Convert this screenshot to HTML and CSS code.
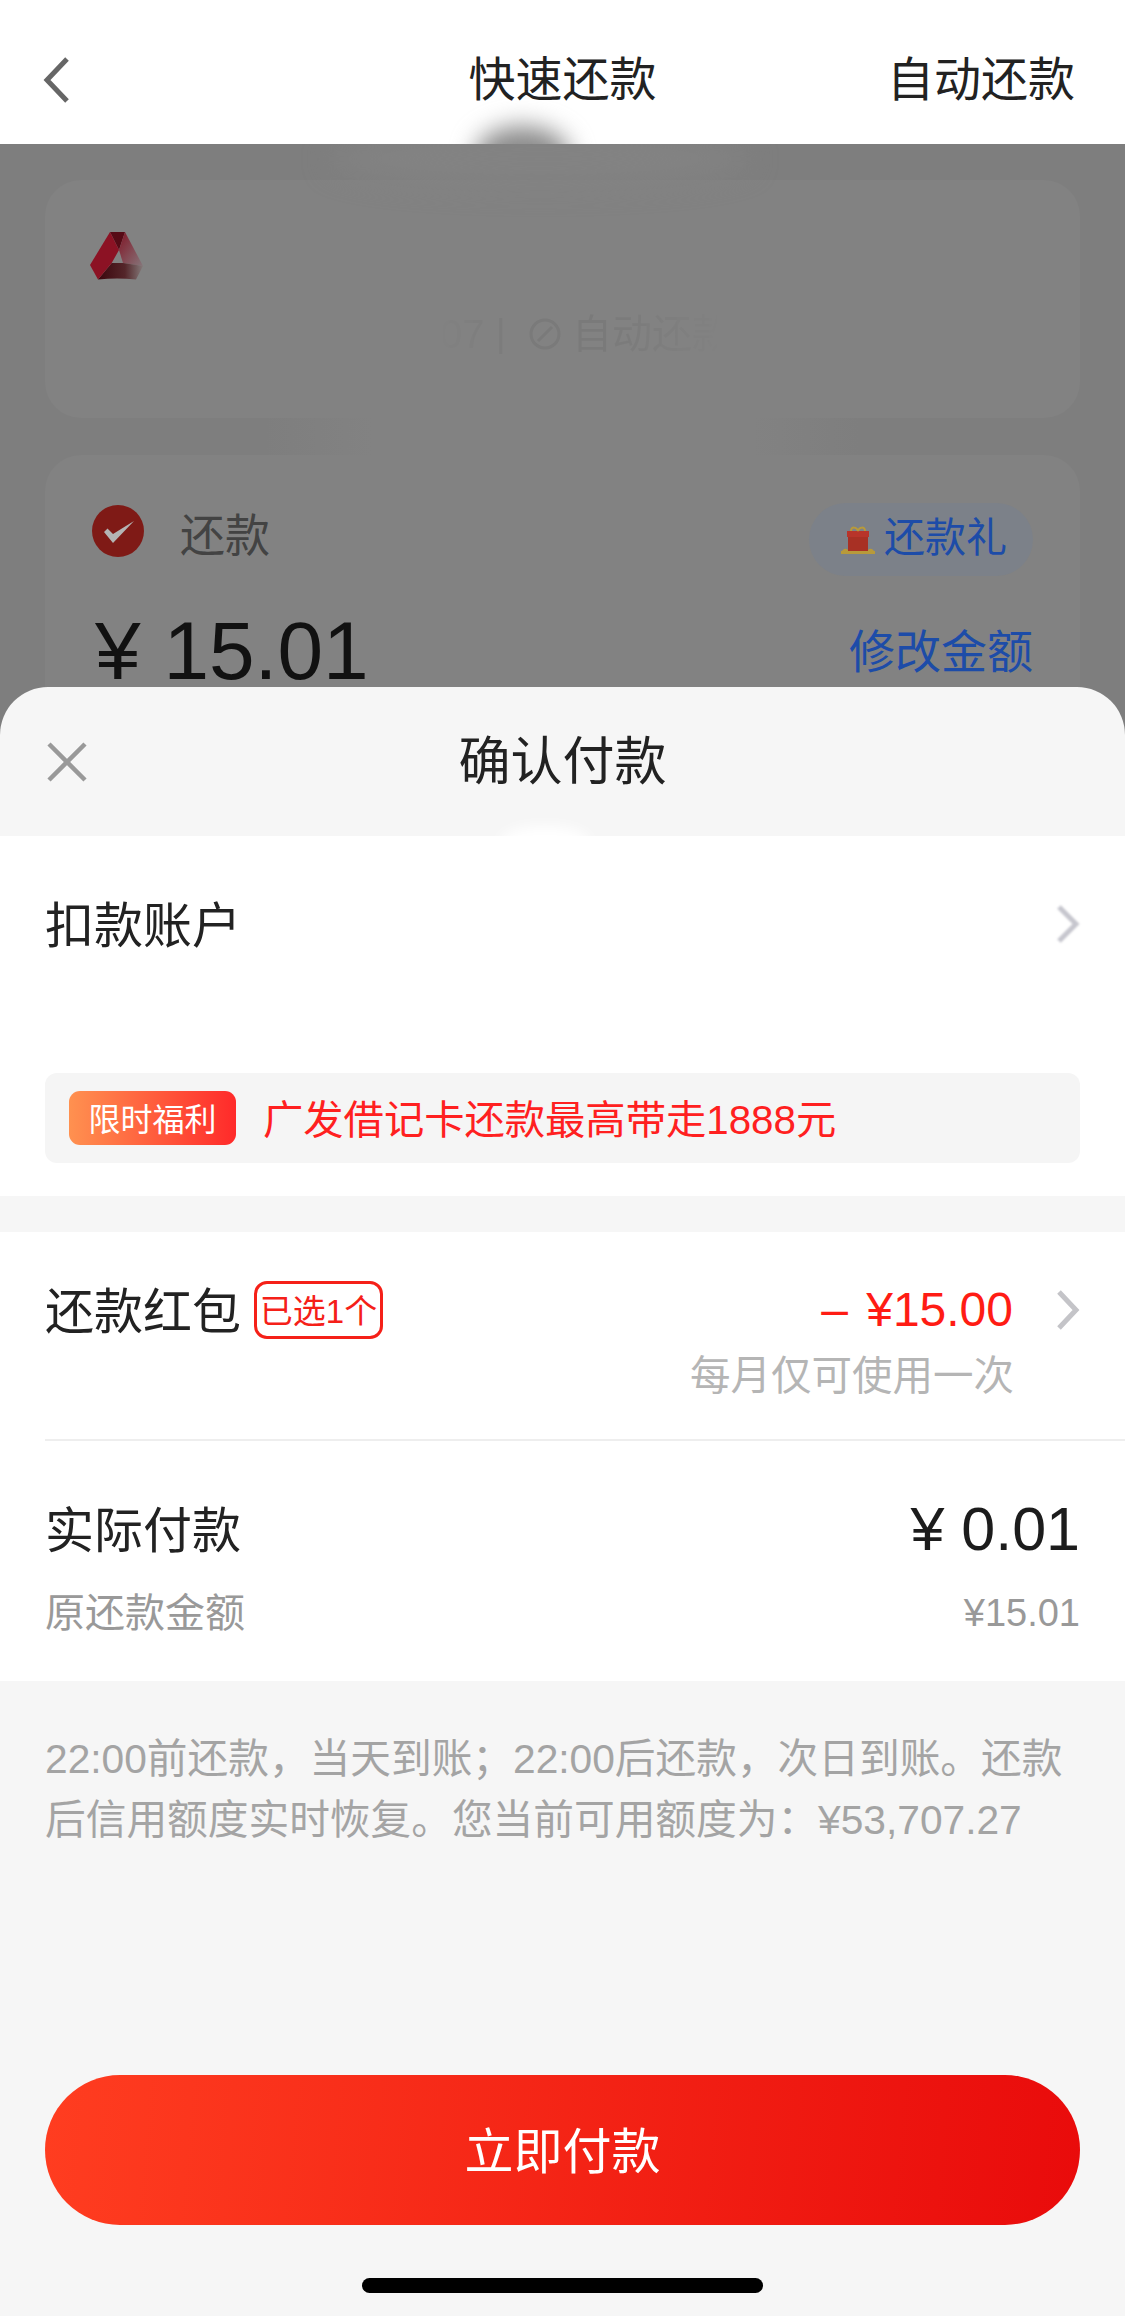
FILE: index.html
```html
<!DOCTYPE html>
<html lang="zh-CN">
<head>
<meta charset="utf-8">
<title>快速还款</title>
<link rel="stylesheet" href="styles.css">
</head>
<body>
<div class="page">
  <header class="nav">
    <svg class="back" viewBox="0 0 27 46" width="27" height="46"><path d="M24 2 4 23l20 21" fill="none" stroke="#666" stroke-width="5"/></svg>
    <div class="nav-title">快速还款</div>
    <div class="nav-action">自动还款</div>
    <div class="smudge-dark"></div>
  </header>

  <div class="behind">
    <div class="smudge-top"></div>
    <section class="card card-bank">
      <svg class="bank-logo" viewBox="0 0 53 48" width="53" height="48">
        <defs>
          <linearGradient id="fadeRight" x1="0" y1="0" x2="1" y2="1"><stop offset="0" stop-color="#801626"/><stop offset="1" stop-color="#86757a"/></linearGradient>
          <linearGradient id="fadeBottom" x1="0" y1="0" x2="1" y2="0"><stop offset="0" stop-color="#3b060d"/><stop offset="0.6" stop-color="#54262a"/><stop offset="1" stop-color="#847a7a"/></linearGradient>
        </defs>
        <path d="M20 0h15l-6 18z" fill="#560b16"/>
        <path d="M35 0l18 34-20-3-4-13z" fill="url(#fadeRight)"/>
        <path d="M21.700 31H33l20 3-7 13.500Q27 45.500 8 47.500z" fill="url(#fadeBottom)"/>
        <path d="M20 0l9 18-7.300 13L8 47.500 0 33z" fill="#8c1224"/>
      </svg>
      <div class="bank-ghost">07 | <svg class="ghost-ring" viewBox="0 0 34 34" width="34" height="34"><circle cx="17" cy="17" r="14" fill="none" stroke="#000" stroke-width="3"/><path d="M10 24 24 10" stroke="#000" stroke-width="3"/></svg> 自动还款</div>
    </section>
    <div class="smudge-gap"></div>
    <section class="card card-pay">
      <div class="pay-top">
        <div class="pay-label">
          <svg viewBox="0 0 52 52" width="52" height="52"><circle cx="26" cy="26" r="26" fill="#7f1a16"/><path d="M12 27l3.500-3.500L21 29l21-13-21 22z" fill="#b4b4b4"/></svg>
          <span>还款</span>
        </div>
        <div class="gift-pill">
          <svg viewBox="0 0 34 28" width="34" height="28"><rect x="7" y="8" width="20" height="17" fill="#a83024"/><rect x="6" y="5" width="22" height="6" fill="#b8342a"/><path d="M10 5c0-5 6-4 7 0 1-4 7-5 7 0" fill="none" stroke="#b89a3a" stroke-width="2"/><path d="M0 27c2-5 5-5 7-3v3zM34 27c-2-5-5-5-7-3v3z" fill="#b89a3a"/><rect x="0" y="25" width="34" height="3" fill="#b89a3a"/></svg>
          <span>还款礼</span>
        </div>
      </div>
      <div class="pay-amount">
        <div class="amount-big">¥ 15.01</div>
        <div class="amount-edit">修改金额</div>
      </div>
    </section>
  </div>

  <main class="sheet">
    <div class="sheet-head">
      <svg class="close" viewBox="0 0 40 40" width="40" height="40"><path d="M2 2l36 36M38 2 2 38" stroke="#999" stroke-width="4.500" fill="none"/></svg>
      <div class="sheet-title">确认付款</div>
      <div class="smudge-light"></div>
    </div>

    <section class="panel panel-account">
      <div class="row-account">
        <span class="label">扣款账户</span>
        <svg class="chev chev-soft" viewBox="0 0 24 40" width="24" height="40"><path d="M3 3l17 17L3 37" fill="none" stroke="#c6c6ce" stroke-width="5"/></svg>
      </div>
      <div class="promo">
        <span class="promo-badge">限时福利</span>
        <span class="promo-text">广发借记卡还款最高带走1888元</span>
      </div>
    </section>

    <section class="panel panel-total">
      <div class="row-packet">
        <div class="packet-left">
          <span class="label">还款红包</span>
          <span class="packet-tag">已选1个</span>
        </div>
        <div class="packet-right">
          <span class="packet-value"><span class="minus">–</span>¥15.00</span>
          <svg class="chev" viewBox="0 0 25 40" width="25" height="40"><path d="M4 2l17 18L4 38" fill="none" stroke="#c4c4c8" stroke-width="5"/></svg>
        </div>
      </div>
      <div class="packet-sub">每月仅可使用一次</div>
      <div class="divider"></div>
      <div class="row-actual">
        <span class="label">实际付款</span>
        <span class="actual-value">¥ 0.01</span>
      </div>
      <div class="row-origin">
        <span>原还款金额</span>
        <span class="origin-value">¥15.01</span>
      </div>
    </section>

    <p class="note">22:00前还款，当天到账；22:00后还款，次日到账。还款<br>后信用额度实时恢复。您当前可用额度为：¥53,707.27</p>

    <div class="footer">
      <button class="pay-btn">立即付款</button>
      <div class="home-bar"></div>
    </div>
  </main>
</div>
</body>
</html>
```
FILE: styles.css
```css
* { box-sizing: border-box; }
html, body { margin: 0; padding: 0; }
body {
  width: 1125px;
  height: 2316px;
  overflow: hidden;
  font-family: "Liberation Sans", "Noto Sans CJK SC", sans-serif;
  color: #1f1f1f;
  background: #f6f6f6;
}
.page { width: 1125px; height: 2316px; display: flex; flex-direction: column; overflow: hidden; }

/* nav */
.nav {
  position: relative;
  height: 144px;
  flex: none;
  padding: 16px 50px 0;
  display: grid;
  grid-template-columns: 1fr auto 1fr;
  align-items: center;
  background: #fff;
  overflow: hidden;
}
.nav-title, .nav-action { font-size: 47px; line-height: 60px; color: #222; }
.nav-action { justify-self: end; }
.back { display: block; margin-left: -7px; }
.smudge-dark {
  position: absolute;
  left: 475px; top: 126px;
  width: 95px; height: 60px;
  border-radius: 50%;
  background: #8a8a8a;
  filter: blur(12px);
}

/* dimmed page behind */
.behind {
  position: relative;
  height: 591px;
  flex: none;
  padding: 36px 45px 0;
  background: #7e7e7e;
  overflow: hidden;
}
.smudge-top {
  position: absolute;
  left: 330px; top: -10px;
  width: 420px; height: 50px;
  border-radius: 50%;
  background: #838383;
  filter: blur(14px);
}
.smudge-gap {
  height: 37px;
  margin: 0 220px;
  background: linear-gradient(90deg, transparent, #828282 18%, #828282 82%, transparent);
}
.card { background: #828282; border-radius: 36px; }
.card-bank { height: 238px; padding: 52px 45px 0; }
.bank-logo { display: block; }
.bank-ghost {
  display: flex;
  align-items: center;
  gap: 10px;
  height: 40px;
  margin: 34px 0 0 350px;
  width: 360px;
  font-size: 40px;
  line-height: 40px;
  color: rgba(0, 0, 0, .06);
  white-space: nowrap;
  -webkit-mask-image: linear-gradient(90deg, transparent, #000 25%, #000 45%, transparent 78%);
  mask-image: linear-gradient(90deg, transparent, #000 25%, #000 45%, transparent 78%);
}
.ghost-ring { flex: none; opacity: .06; margin-left: 12px; }
.card-pay { height: 400px; padding: 48px 47px 0; }
.pay-top { display: flex; align-items: center; justify-content: space-between; height: 73px; }
.pay-label { display: flex; align-items: center; gap: 36px; font-size: 45px; line-height: 60px; color: #434343; }
.pay-label svg { display: block; margin-top: -17px; }
.pay-label span { margin-top: -6px; }
.gift-pill {
  width: 224px;
  height: 73px;
  display: flex;
  align-items: center;
  justify-content: center;
  gap: 9px;
  padding-left: 6px;
  border-radius: 37px;
  background: #7c8189;
  font-size: 41px;
  line-height: 60px;
  color: #1d4ca8;
}
.gift-pill span { margin-top: -4px; }
.gift-pill svg { display: block; }
.pay-amount { display: flex; align-items: center; justify-content: space-between; height: 80px; margin-top: 34px; }
.amount-big { font-size: 82px; line-height: 80px; color: #111; padding: 2px 0 0 3px; }
.amount-edit { font-size: 46px; line-height: 60px; color: #1d4ca8; padding-top: 4px; }

/* sheet */
.sheet {
  position: relative;
  flex: 1;
  margin-top: -48px;
  display: flex;
  flex-direction: column;
  background: #f6f6f6;
  border-radius: 48px 48px 0 0;
  overflow: hidden;
}
.sheet-head {
  position: relative;
  height: 149px;
  flex: none;
  padding: 0 47px;
  display: grid;
  grid-template-columns: 1fr auto 1fr;
  align-items: center;
  overflow: hidden;
}
.close { display: block; }
.sheet-title { font-size: 52px; line-height: 60px; color: #222; }
.smudge-light {
  position: absolute;
  left: 500px; bottom: -22px;
  width: 90px; height: 32px;
  border-radius: 50%;
  background: #fff;
  filter: blur(7px);
}
.panel { background: #fff; flex: none; }
.label { font-size: 49px; line-height: 48px; color: #222; padding-top: 3px; }
.panel-account { height: 360px; padding: 64px 45px 0; }
.row-account { display: flex; align-items: center; justify-content: space-between; height: 48px; }
.chev { display: block; flex: none; }
.chev-soft { filter: blur(1px); }
.promo {
  display: flex;
  align-items: center;
  gap: 27px;
  height: 90px;
  margin-top: 125px;
  padding-left: 24px;
  background: #f5f5f5;
  border-radius: 12px;
}
.promo-badge {
  width: 167px;
  height: 54px;
  display: flex;
  align-items: center;
  justify-content: center;
  padding-bottom: 2px;
  border-radius: 11px;
  background: linear-gradient(90deg, #ff9150, #ff2a2a);
  font-size: 32px;
  color: #fff;
}
.promo-text { font-size: 40.300px; line-height: 50px; color: #ff2020; padding-top: 5px; }

.panel-total { height: 449px; margin-top: 36px; padding-top: 49px; }
.row-packet { display: flex; align-items: center; justify-content: space-between; height: 58px; padding: 0 45px; }
.packet-left { display: flex; align-items: center; gap: 13px; }
.packet-tag {
  width: 129px;
  height: 58px;
  display: flex;
  align-items: center;
  justify-content: center;
  padding-bottom: 3px;
  border: 3px solid #f52018;
  border-radius: 13px;
  font-size: 33px;
  white-space: nowrap;
  color: #f52018;
}
.packet-right { display: flex; align-items: center; gap: 42px; }
.packet-value { font-size: 48px; line-height: 58px; color: #ff1c14; }
.minus { display: inline-block; width: 45px; }
.packet-sub { margin-top: 15px; padding-right: 111px; text-align: right; font-size: 40.500px; line-height: 44px; color: #b5b5b5; }
.divider { height: 2px; margin: 41px 0 0 45px; background: #eeeeee; }
.row-actual { display: flex; align-items: center; justify-content: space-between; height: 62px; margin-top: 57px; padding: 0 45px; }
.actual-value { font-size: 61px; line-height: 62px; color: #1c1c1c; }
.row-origin {
  display: flex;
  align-items: center;
  justify-content: space-between;
  height: 44px;
  margin-top: 31px;
  padding: 0 45px;
  font-size: 40px;
  line-height: 44px;
  color: #999;
}
.origin-value { font-size: 38px; }

.note { flex: none; margin: 48px 0 0; padding: 0 45px; font-size: 40.700px; line-height: 61px; color: #a4a4a4; white-space: nowrap; }

.footer { margin-top: auto; padding-bottom: 23px; display: flex; flex-direction: column; align-items: center; }
.pay-btn {
  width: 1035px;
  height: 150px;
  border: 0;
  padding: 0 0 5px;
  border-radius: 75px;
  background: linear-gradient(95deg, #ff3d20, #e90b0b);
  font: inherit;
  font-size: 49px;
  color: #fff;
}
.home-bar { width: 401px; height: 15px; margin-top: 53px; border-radius: 8px; background: #000; }
```
